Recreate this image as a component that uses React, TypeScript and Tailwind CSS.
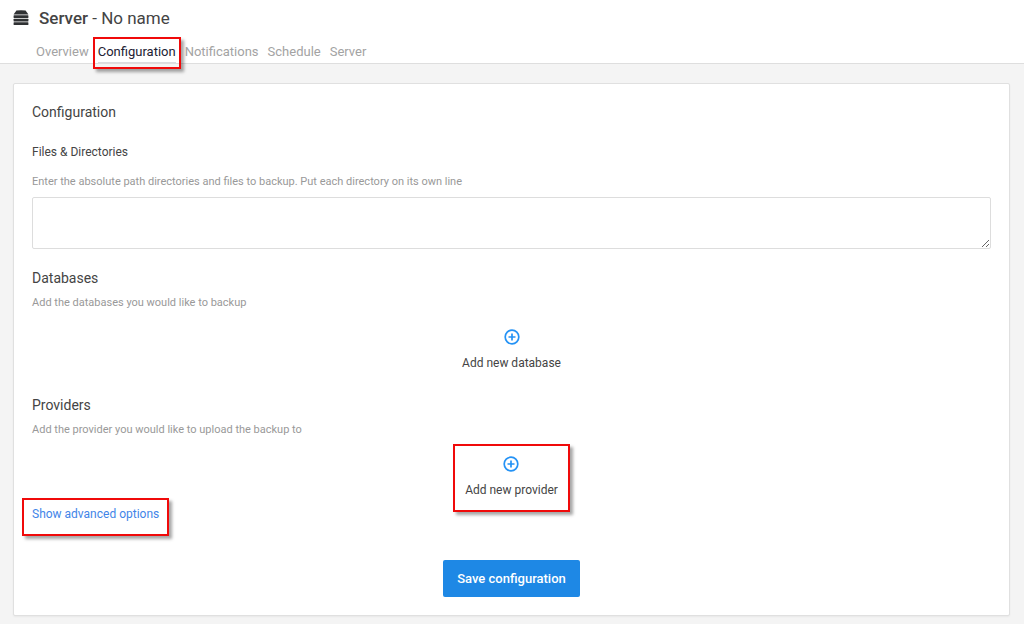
import { useState } from 'react';

const tabs = ['Overview', 'Configuration', 'Notifications', 'Schedule', 'Server'];

const highlight = 'pointer-events-none absolute border-2 border-[#f00a0a] shadow-[3px_3px_3px_rgba(0,0,0,0.35)]';

const ServerIcon = () => (
  <svg className="h-4 w-4" viewBox="0 0 16 16" fill="#2f3133">
    <path d="M3.4 0.6Q8 0 12.6 0.6L15.4 4.6H0.6z" />
    <rect x="0.6" y="5.3" width="14.8" height="2.6" rx="0.5" />
    <rect x="0.6" y="8.8" width="14.8" height="2.6" rx="0.5" />
    <rect x="0.6" y="12.3" width="14.8" height="2.8" rx="0.5" />
  </svg>
);

const PlusCircleIcon = () => (
  <svg className="h-4 w-4" viewBox="0 0 16 16" fill="none" stroke="#2492f5">
    <circle cx="8" cy="8" r="6.8" strokeWidth="1.7" />
    <path d="M8 4.5v7M4.5 8h7" strokeWidth="1.7" />
  </svg>
);

const AddButton = ({ label, highlighted }: { label: string; highlighted?: boolean }) => (
  <button type="button" className="relative flex cursor-pointer flex-col items-center gap-2 text-[12px] leading-5 text-[#444444]">
    <PlusCircleIcon />
    {label}
    {highlighted && <span className={`${highlight} -inset-x-3 -top-3 -bottom-3`} />}
  </button>
);

const App = () => {
  const [activeTab, setActiveTab] = useState('Configuration');
  const [paths, setPaths] = useState('');

  return (
    <div className="min-h-screen bg-[#f4f4f4] font-[Roboto,sans-serif] text-[#444444]">
      <header className="border-b border-[#dedede] bg-white pt-2">
        <div className="flex items-center gap-2.5 px-[13px]">
          <ServerIcon />
          <h1 className="text-[17px] leading-5">
            <span className="font-medium">Server</span> - No name
          </h1>
        </div>
        <nav className="mt-3.5 flex gap-[9px] pl-9">
          {tabs.map((tab) => (
            <a
              key={tab}
              href={`#${tab.toLowerCase()}`}
              onClick={() => setActiveTab(tab)}
              className={`relative border-b text-[13px] leading-5 ${
                tab === activeTab ? 'border-[#dcdce0] text-[#222233]' : 'border-transparent text-[#a3a3a3]'
              }`}
            >
              {tab}
              {tab === 'Configuration' && <span className={`${highlight} -inset-x-[5px] -top-[5px] -bottom-[7px]`} />}
            </a>
          ))}
        </nav>
      </header>

      <main className="pt-[19px] pr-3.5 pb-2 pl-[13px]">
        <form
          onSubmit={(e) => e.preventDefault()}
          className="rounded-xs border border-[#e0e0e0] bg-white p-[18px] shadow-xs"
        >
          <h2 className="text-[14px] leading-5">Configuration</h2>

          <label htmlFor="paths" className="mt-5 block text-[12px] leading-5">
            Files &amp; Directories
          </label>
          <p id="paths-help" className="mt-2.5 text-[11px] leading-5 text-[#999999]">
            Enter the absolute path directories and files to backup. Put each directory on its own line
          </p>
          <textarea
            id="paths"
            aria-describedby="paths-help"
            value={paths}
            onChange={(e) => setPaths(e.target.value)}
            className="mt-[5px] block h-[52px] w-full rounded-xs border border-[#dddddd] bg-white px-3 py-2 text-[12px] outline-none"
          />

          <section className="mt-[19px]">
            <h3 className="text-[14px] leading-5">Databases</h3>
            <p className="mt-[5px] text-[11px] leading-5 text-[#999999]">Add the databases you would like to backup</p>
            <div className="mt-4 flex justify-center">
              <AddButton label="Add new database" />
            </div>
          </section>

          <section className="mt-[22px]">
            <h3 className="text-[14px] leading-5">Providers</h3>
            <p className="mt-[5px] text-[11px] leading-5 text-[#999999]">Add the provider you would like to upload the backup to</p>
            <div className="mt-4 flex justify-center">
              <AddButton label="Add new provider" highlighted />
            </div>
          </section>

          <div className="mt-1 flex">
            <button type="button" className="relative cursor-pointer text-[12px] leading-5 text-[#4285e8]">
              Show advanced options
              <span className={`${highlight} -inset-x-2.5 -top-1.5 -bottom-3`} />
            </button>
          </div>

          <div className="mt-9 flex justify-center">
            <button
              type="submit"
              className="h-[37px] cursor-pointer rounded-xs bg-[#1e88e5] px-3.5 text-[13px] leading-5 font-medium text-white"
            >
              Save configuration
            </button>
          </div>
        </form>
      </main>
    </div>
  );
};

export default App;
